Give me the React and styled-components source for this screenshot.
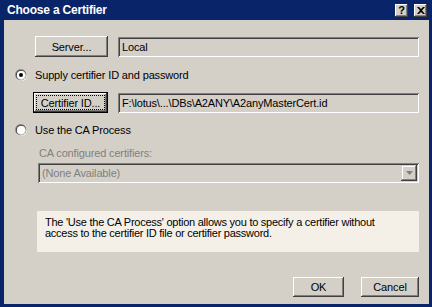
import React from 'react';
import styled, { createGlobalStyle } from 'styled-components';

const Global = createGlobalStyle`
  html, body {
    margin: 0;
    padding: 0;
    background: #ffffff;
  }
  body {
    font-family: "Liberation Sans", Arial, sans-serif;
    font-size: 11px;
    letter-spacing: -0.15px;
    color: #000;
  }
`;

const Window = styled.div`
  box-sizing: border-box;
  width: 432px;
  height: 307px;
  background: #0a246a;
  padding: 0 3px 3px 4px;
  display: flex;
  flex-direction: column;
`;

const TitleBar = styled.div`
  height: 20px;
  margin: 0 -3px 0 -4px;
  padding: 0 5px 0 7px;
  display: flex;
  align-items: center;
  background: #0a246a;
`;

const Title = styled.div`
  flex: 1;
  color: #fff;
  font-weight: bold;
  font-size: 12px;
  letter-spacing: -0.2px;
`;

const CaptionButton = styled.div`
  box-sizing: border-box;
  width: 13px;
  height: 13px;
  margin-left: ${(p) => p.$gap || 0}px;
  background: #d4d0c8;
  box-shadow: inset -1px -1px #404040, inset 1px 1px #fff, inset -2px -2px #808080;
  display: flex;
  align-items: center;
  justify-content: center;
  font-weight: bold;
  font-size: 11px;
  line-height: 1;
  color: #000;
`;

const Body = styled.div`
  flex: 1;
  background: #d4d0c8;
  padding: 0 10px 0 11px;
  display: flex;
  flex-direction: column;
`;

const FieldRow = styled.div`
  display: flex;
  align-items: center;
  margin-top: ${(p) => p.$top}px;
  margin-left: ${(p) => p.$indent}px;
  height: 21px;
`;

const Button = styled.div`
  box-sizing: border-box;
  width: ${(p) => p.$w}px;
  height: ${(p) => p.$h || 21}px;
  background: #d4d0c8;
  display: flex;
  align-items: center;
  justify-content: center;
  box-shadow: ${(p) =>
    p.$focused
      ? 'inset 0 0 0 1px #000, inset -2px -2px #404040, inset 2px 2px #fff, inset -3px -3px #808080'
      : 'inset -1px -1px #404040, inset 1px 1px #fff, inset -2px -2px #808080'};
`;

const FocusRing = styled.span`
  align-self: stretch;
  flex: 1;
  margin: 4px;
  display: flex;
  align-items: center;
  justify-content: center;
  outline: 1px dotted #000;
`;

const Field = styled.div`
  box-sizing: border-box;
  flex: 1;
  height: 20px;
  margin-left: ${(p) => p.$gap}px;
  padding: 0 4px;
  display: flex;
  align-items: center;
  background: #d4d0c8;
  white-space: nowrap;
  overflow: hidden;
  box-shadow: inset 1px 1px #808080, inset -1px -1px #fff, inset 2px 2px #404040, inset -2px -2px #d4d0c8;
`;

const RadioRow = styled.label`
  display: flex;
  align-items: center;
  height: 14px;
  margin-top: ${(p) => p.$top}px;
`;

const RadioText = styled.span`
  margin-left: 8px;
`;

const DisabledLabel = styled.div`
  margin-top: 10px;
  margin-left: 24px;
  height: 13px;
  line-height: 13px;
  color: #808080;
`;

const Combo = styled.div`
  box-sizing: border-box;
  height: 20px;
  margin-top: 3px;
  margin-left: 23px;
  padding: 2px 2px 2px 4px;
  display: flex;
  align-items: center;
  background: #d4d0c8;
  color: #808080;
  box-shadow: inset 1px 1px #808080, inset -1px -1px #fff, inset 2px 2px #404040, inset -2px -2px #d4d0c8;
`;

const ComboText = styled.div`
  flex: 1;
`;

const DropButton = styled.div`
  box-sizing: border-box;
  width: 16px;
  height: 16px;
  background: #d4d0c8;
  display: flex;
  align-items: center;
  justify-content: center;
  box-shadow: inset -1px -1px #404040, inset 1px 1px #d4d0c8, inset -2px -2px #808080, inset 2px 2px #fff;
`;

const InfoBox = styled.div`
  box-sizing: border-box;
  height: 41px;
  margin-top: 28px;
  margin-left: 22px;
  padding: 6px 8px;
  background: #f4f0e8;
  line-height: 11px;
  letter-spacing: -0.25px;
  white-space: nowrap;
`;

const Footer = styled.div`
  display: flex;
  justify-content: flex-end;
  gap: 17px;
  margin-top: 25px;
`;

const Radio = ({ checked }) => (
  <svg width="12" height="12" viewBox="0 0 12 12">
    <circle cx="6.3" cy="6.3" r="5.7" fill="#fff" />
    <circle cx="5.8" cy="5.8" r="5.7" fill="#808080" />
    <circle cx="6" cy="6" r="5" fill="#404040" />
    <circle cx="6.4" cy="6.4" r="4.6" fill="#d4d0c8" />
    <circle cx="6" cy="6" r="4" fill="#fff" />
    {checked && <circle cx="6" cy="6" r="2" fill="#000" />}
  </svg>
);

const App = () => (
  <>
    <Global />
    <Window>
      <TitleBar>
        <Title>Choose a Certifier</Title>
        <CaptionButton>?</CaptionButton>
        <CaptionButton $gap={6}>
          <svg width="8" height="7" viewBox="0 0 8 7">
            <path d="M0 0h2l2 2l2-2h2L5 3.5L8 7H6L4 5L2 7H0l3-3.5z" fill="#000" />
          </svg>
        </CaptionButton>
      </TitleBar>
      <Body>
        <FieldRow $top={16} $indent={20}>
          <Button $w={73}>Server...</Button>
          <Field $gap={10}>Local</Field>
        </FieldRow>

        <RadioRow $top={11}>
          <Radio checked />
          <RadioText>Supply certifier ID and password</RadioText>
        </RadioRow>

        <FieldRow $top={10} $indent={18}>
          <Button $w={75} $focused>
            <FocusRing>Certifier ID...</FocusRing>
          </Button>
          <Field $gap={10}>F:\lotus\...\DBs\A2ANY\A2anyMasterCert.id</Field>
        </FieldRow>

        <RadioRow $top={10}>
          <Radio />
          <RadioText>Use the CA Process</RadioText>
        </RadioRow>

        <DisabledLabel>CA configured certifiers:</DisabledLabel>
        <Combo>
          <ComboText>(None Available)</ComboText>
          <DropButton>
            <svg width="7" height="4" viewBox="0 0 7 4">
              <path d="M0 0h7L3.5 4z" fill="#808080" />
            </svg>
          </DropButton>
        </Combo>

        <InfoBox>
          The 'Use the CA Process' option allows you to specify a certifier without
          <br />
          access to the certifier ID file or certifier password.
        </InfoBox>

        <Footer>
          <Button $w={51} $h={20}>OK</Button>
          <Button $w={58} $h={20}>Cancel</Button>
        </Footer>
      </Body>
    </Window>
  </>
);

export default App;
